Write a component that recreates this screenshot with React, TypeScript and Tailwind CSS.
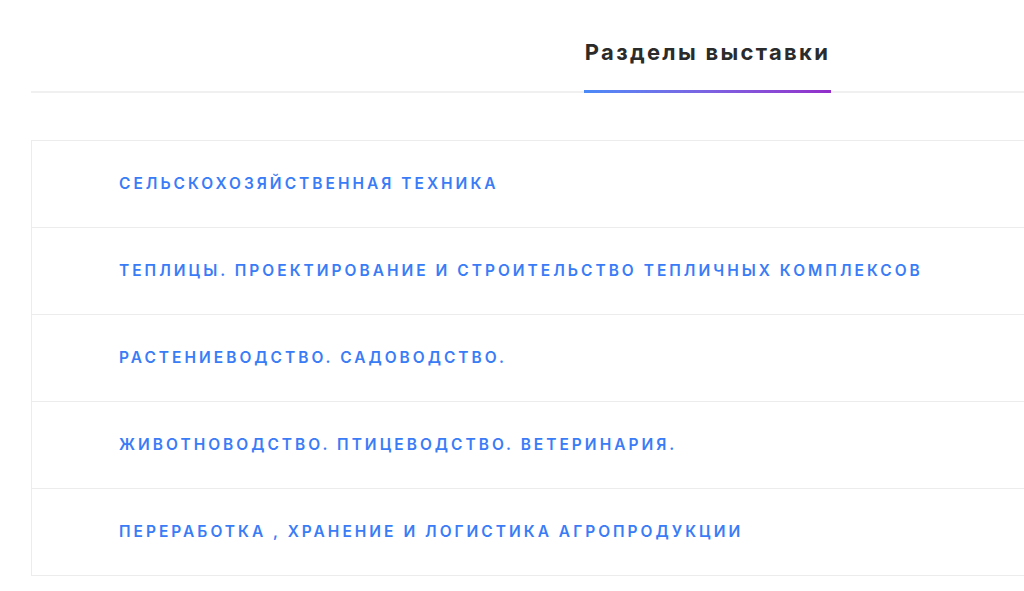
const sections = [
  'Сельскохозяйственная техника',
  'Теплицы. Проектирование и строительство тепличных комплексов',
  'Растениеводство. Садоводство.',
  'Животноводство. Птицеводство. Ветеринария.',
  'Переработка , хранение и логистика агропродукции'
]

export default function App() {
  return (
    <div
      className="w-[1024px] h-[591px] bg-white overflow-hidden"
      style={{ fontFamily: 'Inter, "DejaVu Sans", sans-serif' }}
    >
      <div className="ml-[31px] w-[1010px] pt-[32px]">
        <div className="flex border-b-2 border-[#f0f0f0]">
          <div className="ml-[553px] w-[247px] relative pb-[19px] text-center">
            <span className="text-[22px] leading-[40px] font-bold text-[#2b2b2b] tracking-[2.3px]">
              Разделы выставки
            </span>
            <div className="absolute left-0 right-0 -bottom-[2px] h-[3px] bg-gradient-to-r from-[#4a8af8] to-[#922dca]"></div>
          </div>
        </div>

        <div className="mt-[47px] border border-[#ececec]">
          {sections.map((s, i) => (
            <div
              key={i}
              className={`h-[86px] flex items-center pl-[87px] ${i < sections.length - 1 ? 'border-b border-[#ececec] h-[87px]' : ''}`}
            >
              <span className="text-[15.5px] font-semibold uppercase text-[#3a7cf6] tracking-[3px]">
                {s}
              </span>
            </div>
          ))}
        </div>
      </div>
    </div>
  )
}
